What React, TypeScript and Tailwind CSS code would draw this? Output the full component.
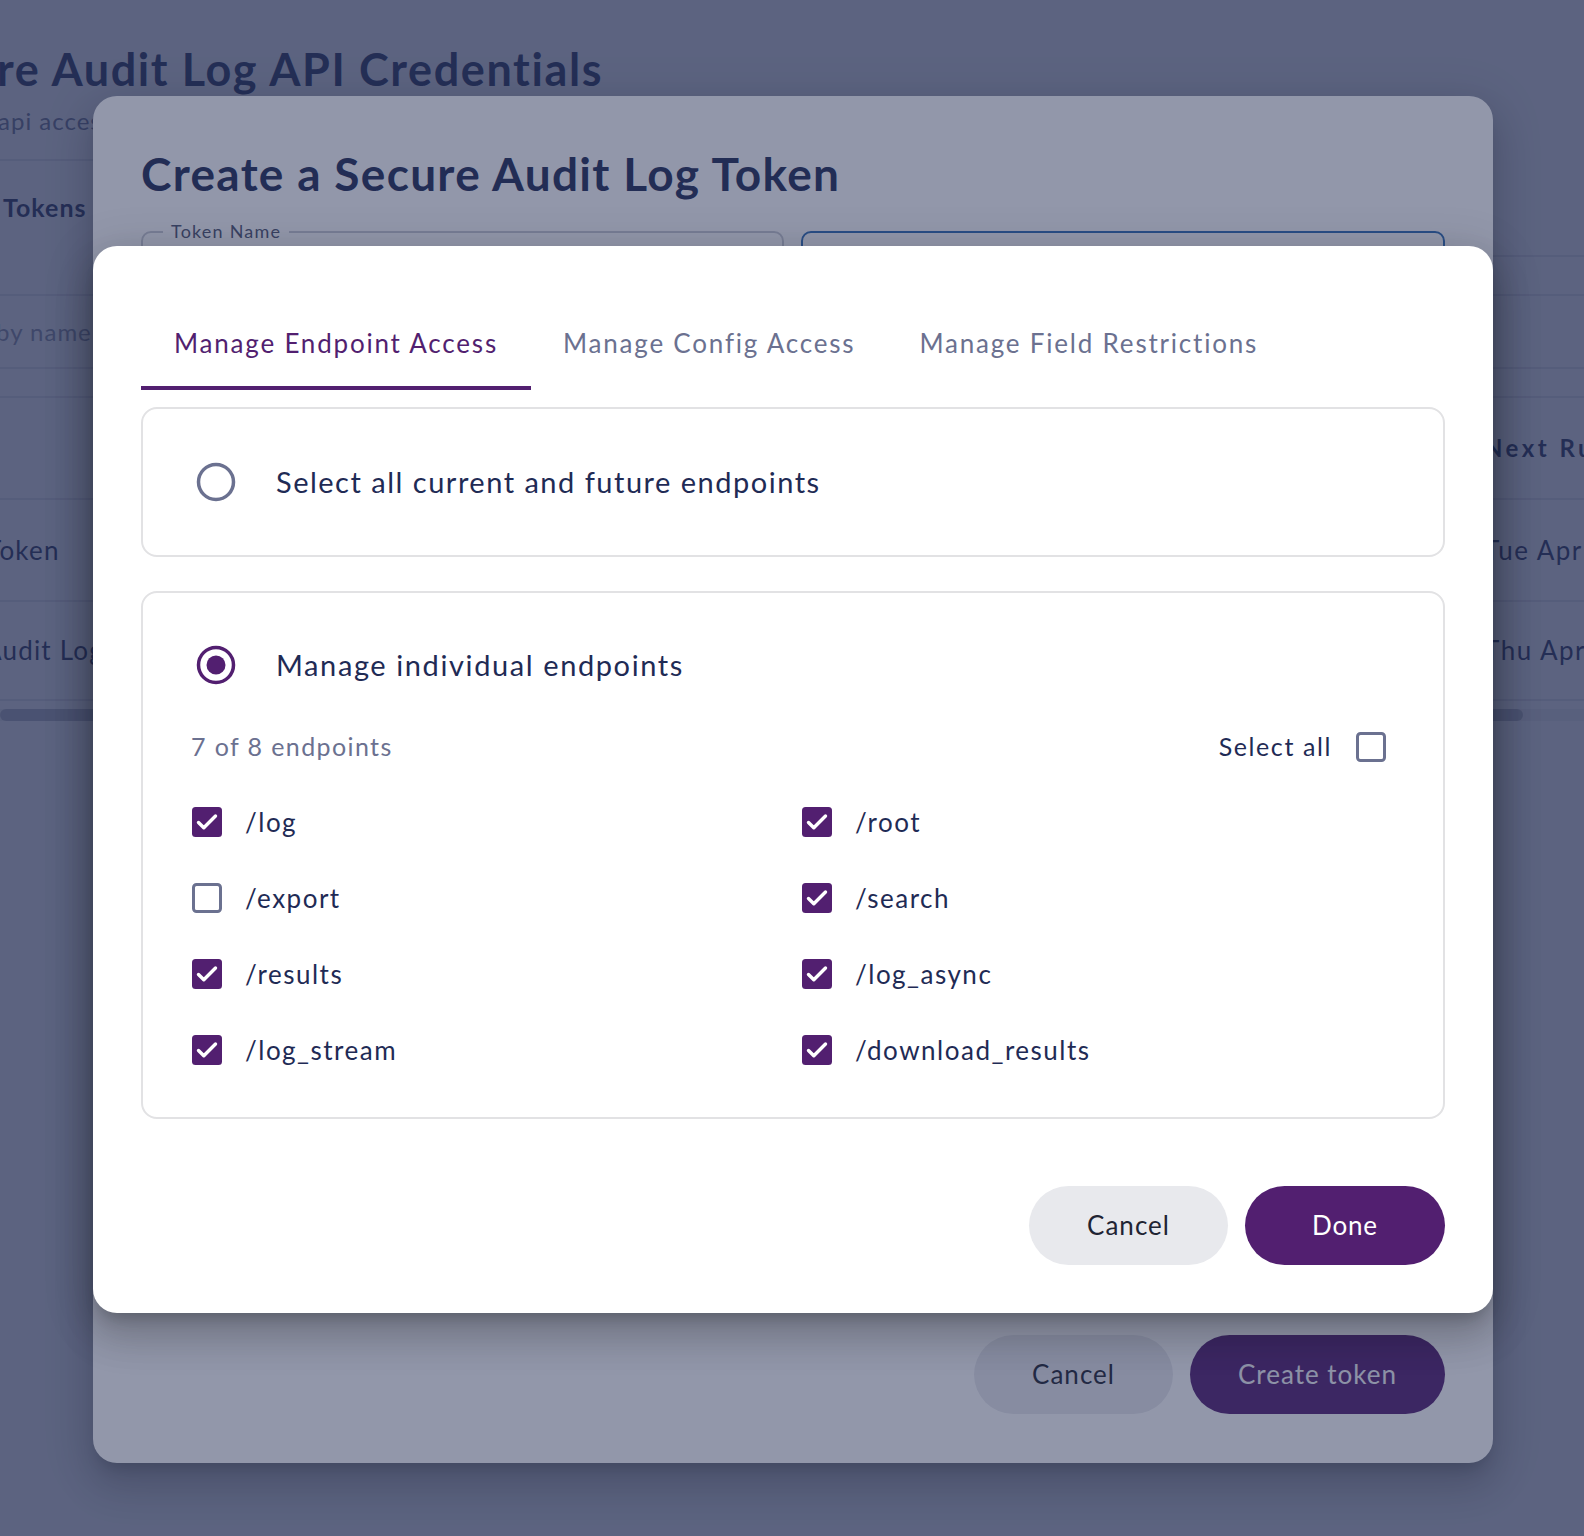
import React from "react";

function Radio({ checked }: { checked: boolean }) {
  return (
    <svg width="40" height="40" viewBox="0 0 40 40" className="shrink-0">
      <circle cx="20" cy="20" r="17.5" fill="none" stroke={checked ? "#521f70" : "#6b7190"} strokeWidth="3.5" />
      {checked && <circle cx="20" cy="20" r="9.5" fill="#521f70" />}
    </svg>
  );
}

function Checkbox({ checked }: { checked: boolean }) {
  if (checked)
    return (
      <svg width="30" height="30" viewBox="0 0 30 30" className="shrink-0">
        <rect x="0" y="0" width="30" height="30" rx="3.5" fill="#521f70" />
        <path d="M6.5 15.5 L11.8 20.8 L23.5 9" fill="none" stroke="white" strokeWidth="3.4" strokeLinecap="round" strokeLinejoin="round" />
      </svg>
    );
  return (
    <svg width="30" height="30" viewBox="0 0 30 30" className="shrink-0">
      <rect x="1.5" y="1.5" width="27" height="27" rx="3" fill="white" stroke="#6b7190" strokeWidth="3" />
    </svg>
  );
}

const endpoints: [string, boolean][] = [
  ["/log", true],
  ["/root", true],
  ["/export", false],
  ["/search", true],
  ["/results", true],
  ["/log_async", true],
  ["/log_stream", true],
  ["/download_results", true],
];

function Background() {
  return (
    <div className="flex flex-col w-full text-[#1f2b55]">
      <div className="h-[98px] pt-[40px] overflow-hidden">
        <h1 className="ml-[-3px] text-[45px] leading-[58px] font-bold tracking-[1.6px] whitespace-nowrap">re Audit Log API Credentials</h1>
      </div>
      <div className="h-[46px] flex items-center">
        <p className="text-[24px] tracking-[1px] text-[#6b7190] whitespace-nowrap ml-[-2px]">api access credentials</p>
      </div>
      <div className="h-[15px]" />
      <div className="w-[1400px] border-t-2 border-[#e4e5ea]" />
      <div className="h-[94px] flex items-center">
        <span className="text-[25px] tracking-[1px] ml-[3px] font-bold">Tokens</span>
      </div>
      <div className="w-full flex justify-end">
        <div className="w-[700px] border-t-2 border-[#e4e5ea]" />
      </div>
      <div className="h-[37px]" />
      <div className="w-full border-t-2 border-[#e4e5ea]" />
      <div className="h-[71px] flex items-center">
        <span className="text-[24px] tracking-[1px] text-[#8a8fa6] ml-[-4px] whitespace-nowrap">by name</span>
      </div>
      <div className="w-full border-t-2 border-[#e4e5ea]" />
      <div className="h-[27px]" />
      <div className="w-full border-t-2 border-[#e4e5ea]" />
      <div className="h-[100px] flex items-center">
        <div className="w-[1484px] shrink-0" />
        <span className="text-[24px] font-bold tracking-[3.5px] whitespace-nowrap">Next Run</span>
      </div>
      <div className="w-full border-t-2 border-[#e4e5ea]" />
      <div className="h-[100px] flex items-center">
        <div className="w-[1484px] shrink-0 overflow-hidden">
          <span className="text-[26px] tracking-[1.2px] ml-[-14px] whitespace-nowrap">Token</span>
        </div>
        <span className="text-[26px] tracking-[1.5px] whitespace-nowrap">Tue Apr</span>
      </div>
      <div className="w-full border-t-2 border-[#e4e5ea]" />
      <div className="h-[97px] flex items-center">
        <div className="w-[1484px] shrink-0 overflow-hidden">
          <span className="text-[26px] tracking-[1.2px] ml-[-16px] whitespace-nowrap">Audit Log</span>
        </div>
        <span className="text-[26px] tracking-[1.5px] whitespace-nowrap">Thu Apr</span>
      </div>
      <div className="w-full border-t-2 border-[#e4e5ea]" />
      <div className="h-[8px]" />
      <div className="w-full h-[12px] bg-[#f0f0f3]">
        <div className="w-[1523px] h-[12px] rounded-full bg-[#b9bbc6]" />
      </div>
    </div>
  );
}

function BackModal() {
  return (
    <div className="absolute left-[93px] top-[96px] w-[1400px] h-[1367px] bg-white rounded-[24px] shadow-[0_11px_15px_-7px_rgba(0,0,0,0.2),0_24px_38px_3px_rgba(0,0,0,0.14),0_9px_46px_8px_rgba(0,0,0,0.12)] flex flex-col px-[48px] pt-[48px] pb-[49px]">
      <h2 className="text-[46px] leading-[60px] font-bold tracking-[1.3px] text-[#1f2b55] whitespace-nowrap">Create a Secure Audit Log Token</h2>
      <div className="mt-[14px] flex gap-[17px]">
        <fieldset className="w-[643px] h-[80px] border-2 border-[#c9cbd4] rounded-[10px] px-[20px]">
          <legend className="px-[8px] text-[18px] tracking-[1.2px] text-[#4d546f]">Token Name</legend>
        </fieldset>
        <fieldset className="flex-1 h-[80px] border-2 border-[#2f6cb5] rounded-[10px] mt-[13px]" />
      </div>
      <div className="mt-auto flex justify-end gap-[17px]">
        <div className="w-[199px] h-[79px] rounded-full bg-[#e8e9ed] flex items-center justify-center text-[26px] tracking-[1px] text-[#1f2433]">Cancel</div>
        <div className="w-[255px] h-[79px] rounded-full bg-[#521f70] flex items-center justify-center text-[26px] tracking-[1px] text-[#f4f4f8]">Create token</div>
      </div>
    </div>
  );
}

function FrontModal() {
  return (
    <div className="absolute left-[93px] top-[246px] w-[1400px] h-[1067px] bg-white rounded-[24px] shadow-[0_11px_15px_-7px_rgba(0,0,0,0.2),0_24px_38px_3px_rgba(0,0,0,0.14),0_9px_46px_8px_rgba(0,0,0,0.12)] flex flex-col px-[48px] pt-[48px] pb-[48px] text-[#1f2b55]">
      <div className="flex h-[96px]">
        <div className="h-full px-[33px] pt-[6px] flex items-center border-b-4 border-[#521f70] text-[26px] tracking-[1.8px] text-[#521f70] whitespace-nowrap">Manage Endpoint Access</div>
        <div className="h-full px-[32px] pt-[6px] flex items-center border-b-4 border-transparent text-[26px] tracking-[1.8px] text-[#6b7190] whitespace-nowrap">Manage Config Access</div>
        <div className="h-full px-[32px] pt-[6px] flex items-center border-b-4 border-transparent text-[26px] tracking-[1.8px] text-[#6b7190] whitespace-nowrap">Manage Field Restrictions</div>
      </div>
      <div className="mt-[17px] h-[150px] border-2 border-[#e2e2e4] rounded-[16px] flex items-center pl-[53px] gap-[40px]">
        <Radio checked={false} />
        <span className="text-[29px] tracking-[1.5px] whitespace-nowrap">Select all current and future endpoints</span>
      </div>
      <div className="mt-[34px] h-[528px] border-2 border-[#e2e2e4] rounded-[16px] flex flex-col pt-[52px] pl-[48px] pr-[57px]">
        <div className="flex items-center pl-[5px] gap-[40px] h-[40px]">
          <Radio checked={true} />
          <span className="text-[29px] tracking-[1.6px] whitespace-nowrap">Manage individual endpoints</span>
        </div>
        <div className="mt-[46px] h-[32px] flex items-center justify-between">
          <span className="text-[25px] tracking-[1.4px] text-[#6b7190]">7 of 8 endpoints</span>
          <div className="flex items-center gap-[24px]">
            <span className="text-[25px] tracking-[1.6px]">Select all</span>
            <Checkbox checked={false} />
          </div>
        </div>
        <div className="mt-[44px] grid grid-cols-[610px_1fr] gap-y-[46px] pl-[1px]">
          {endpoints.map(([name, c]) => (
            <div key={name} className="flex items-center gap-[23px] h-[30px]">
              <Checkbox checked={c} />
              <span className="text-[26px] tracking-[1.5px] whitespace-nowrap">{name}</span>
            </div>
          ))}
        </div>
      </div>
      <div className="mt-auto flex justify-end gap-[17px]">
        <div className="w-[199px] h-[79px] rounded-full bg-[#e8e9ed] flex items-center justify-center text-[26px] tracking-[1px] text-[#1f2433]">Cancel</div>
        <div className="w-[200px] h-[79px] rounded-full bg-[#521f70] flex items-center justify-center text-[26px] tracking-[0.8px] text-white">Done</div>
      </div>
    </div>
  );
}

export default function App() {
  return (
    <div className="relative w-[1584px] h-[1536px] overflow-hidden bg-white font-[Lato,sans-serif]">
      <Background />
      <div className="absolute inset-0 bg-[rgba(37,47,85,0.5)]" />
      <BackModal />
      <div className="absolute inset-0 bg-[rgba(37,47,85,0.5)]" />
      <FrontModal />
    </div>
  );
}
